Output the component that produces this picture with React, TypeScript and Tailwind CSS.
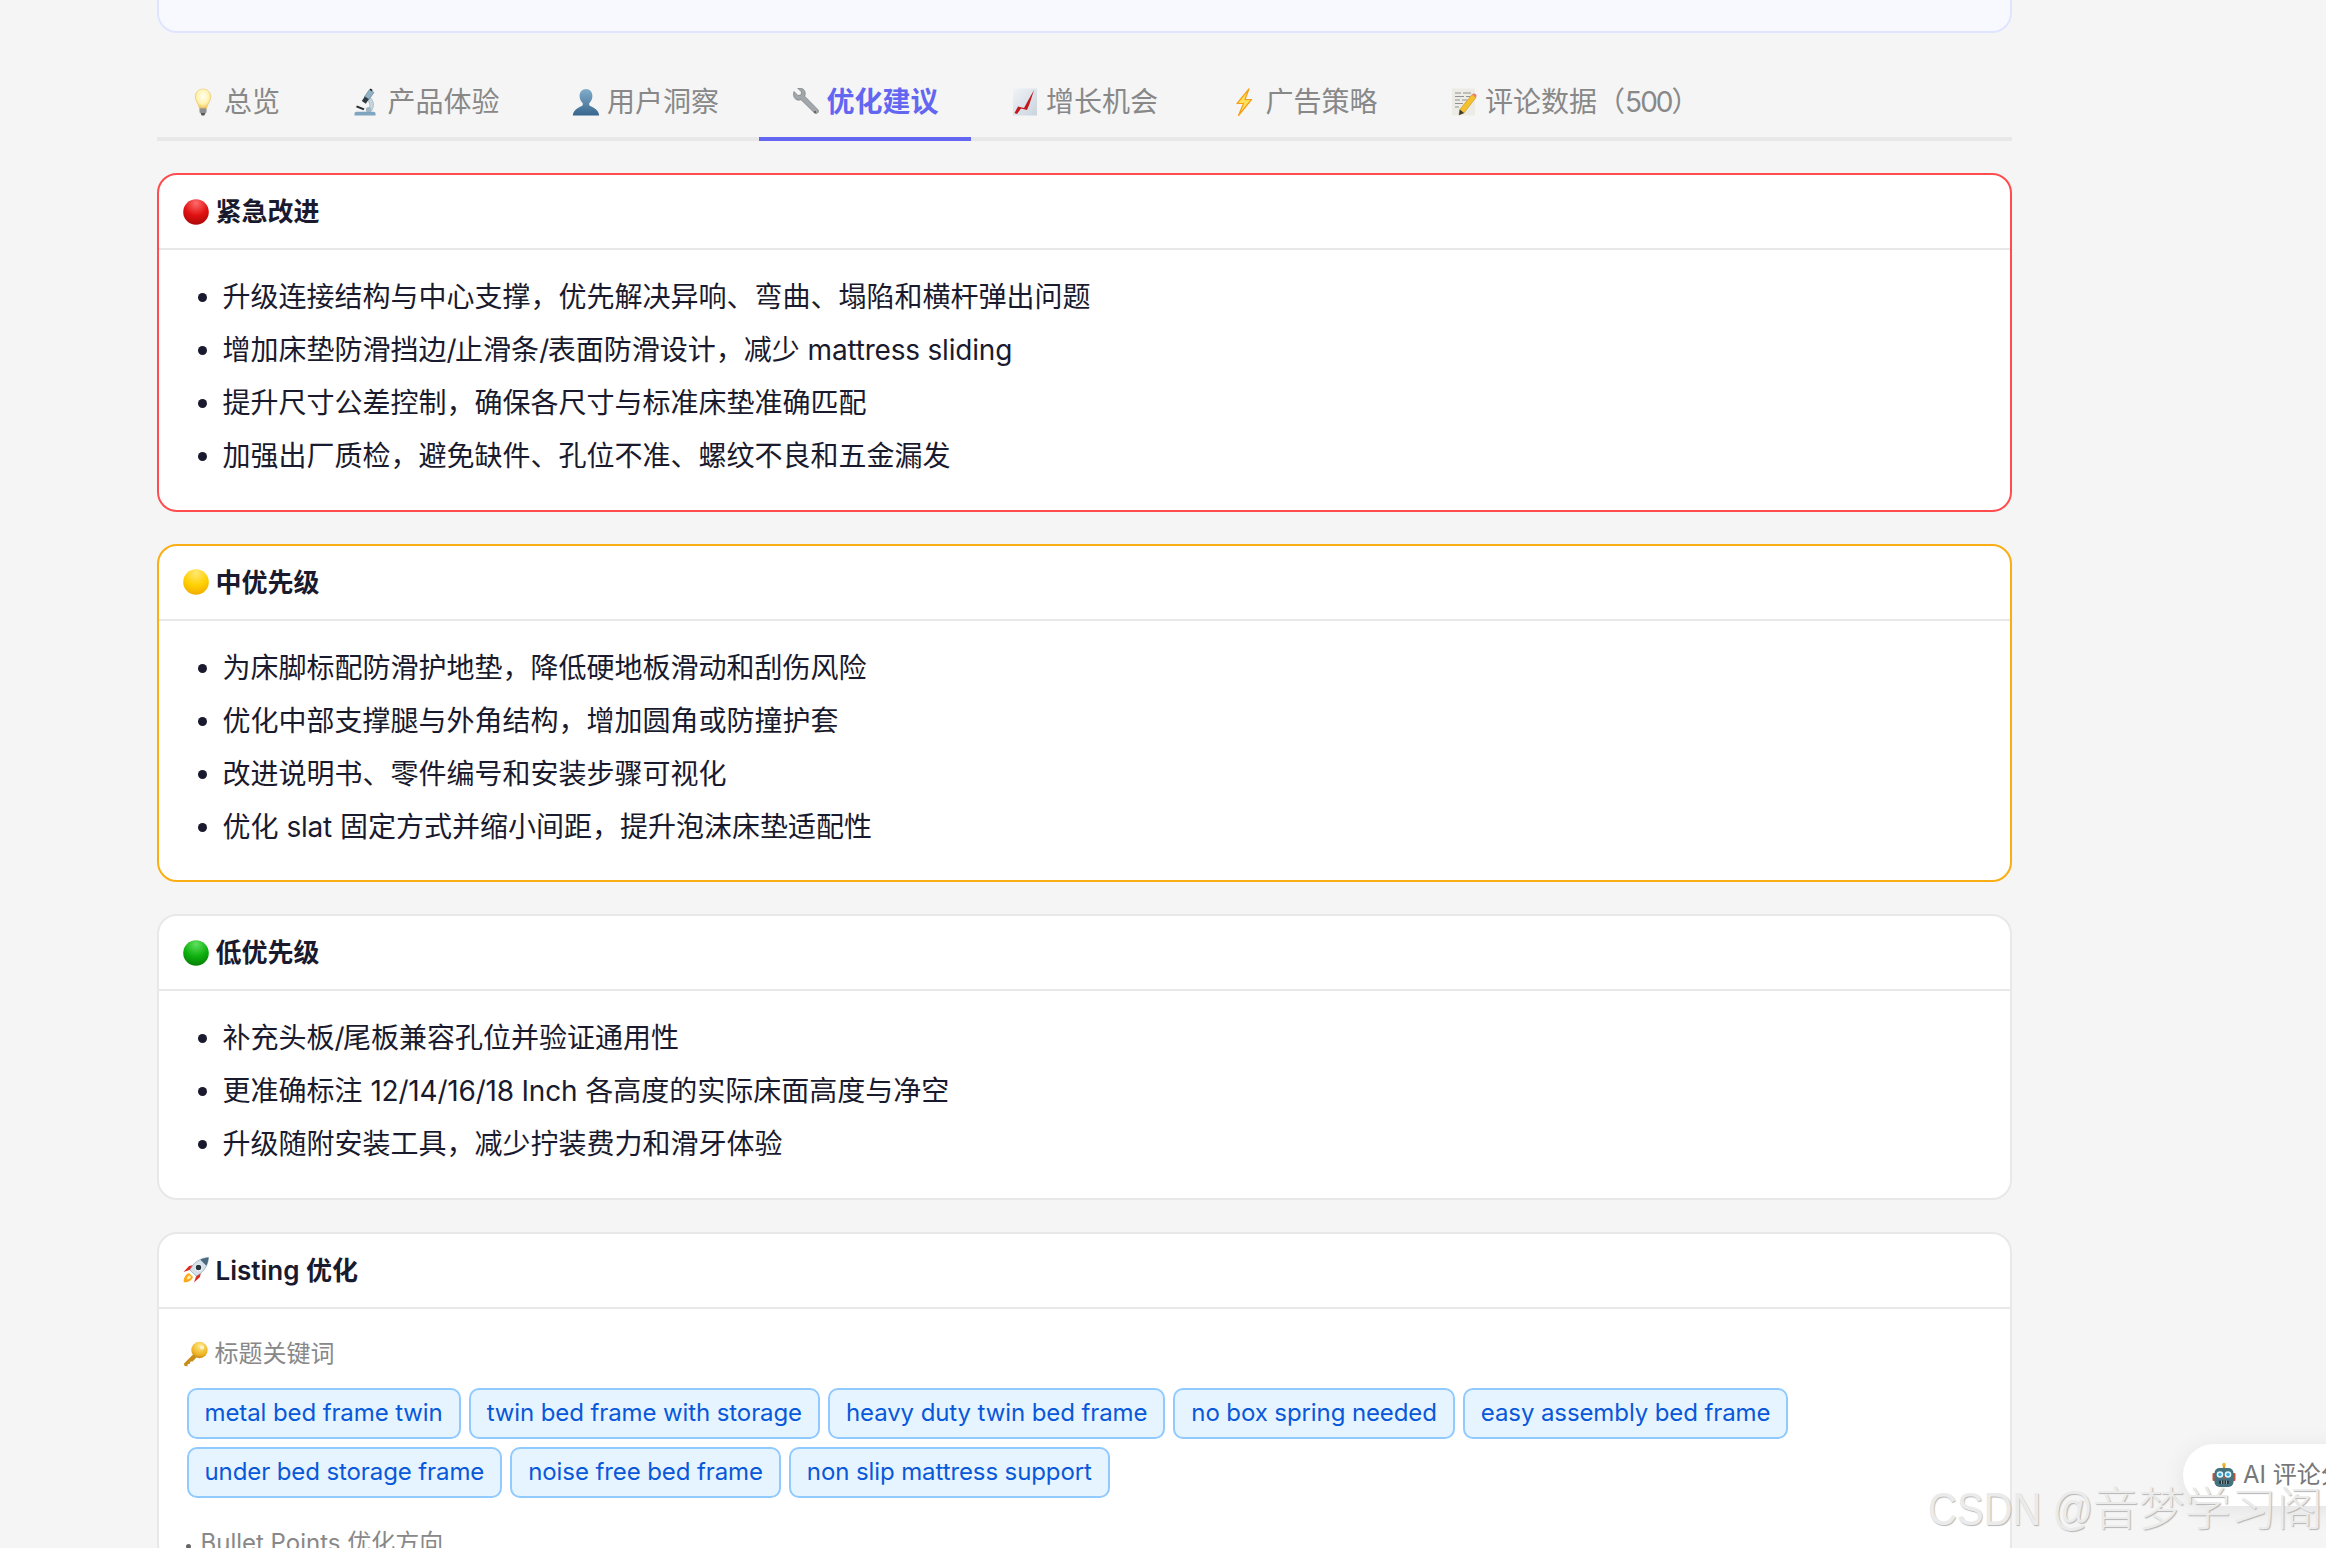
import React from "react";

const S = ({ w = 28, h = 28, vb = "0 0 28 28", children }: { w?: number; h?: number; vb?: string; children: React.ReactNode }) => (
  <svg width={w} height={h} viewBox={vb} className="block shrink-0">{children}</svg>
);

const Bulb = () => (
  <S>
    <defs>
      <radialGradient id="bulbG" cx="50%" cy="38%" r="60%">
        <stop offset="0%" stopColor="#fffef0" />
        <stop offset="65%" stopColor="#fff3b0" />
        <stop offset="100%" stopColor="#eec660" />
      </radialGradient>
    </defs>
    <path d="M14 1c-4.4 0-7.8 3.4-7.8 7.8 0 3.6 2.6 6.2 3.6 9.600.2.7.4 1.300.5 2h7.400c.1-.7.3-1.300.5-2 1-3.400 3.600-6 3.600-9.600C21.800 4.400 18.400 1 14 1z" fill="url(#bulbG)" stroke="#e9c566" strokeWidth="0.6" />
    <rect x="10.500" y="20.300" width="7" height="4.700" rx="1" fill="#8f8f8f" />
    <path d="M11.500 25h5l-1.200 2.500h-2.600z" fill="#555" />
  </S>
);
const Microscope = () => (
  <S>
    <path d="M2.500 27.500h21v-2c0-1.100-1-1.800-2-1.800h-17c-1 0-2 .7-2 1.800z" fill="#7fa5bf" />
    <path d="M17 9c4.800 2.200 6.200 9.500 1.800 14.700h-4.300c4-2.500 4.500-8 1-11.800z" fill="#c7d5de" stroke="#7d95a5" strokeWidth="0.5" />
    <path d="M12.500 8.500L17.500 1.500l4.500 3-5 7z" fill="#8fb0c6" stroke="#55707f" strokeWidth="0.5" />
    <path d="M9.800 13l3-4.500 4 2.800-3 4.500z" fill="#2f3b42" />
    <path d="M5 17.500l7.500 3-1 1.800-7.500-3z" fill="#2a2f33" />
    <circle cx="16.500" cy="21.500" r="2.600" fill="#9db4c2" />
    <path d="M18.500.5l2.200 1.500-.9 1.200-2.200-1.500z" fill="#1e2427" />
  </S>
);
const User = () => (
  <S>
    <defs>
      <linearGradient id="userG" x1="0" y1="0" x2="0" y2="1">
        <stop offset="0%" stopColor="#82aecb" />
        <stop offset="100%" stopColor="#38658d" />
      </linearGradient>
    </defs>
    <path d="M14 1c-4 0-6.400 3-6.400 7 0 3 1.400 5.500 3 7 .4.400.4 1.500 0 2.200C9.500 19 1.500 20 .8 27.500h26.400C26.500 20 18.500 19 17.400 17.200c-.4-.7-.4-1.800 0-2.200 1.600-1.500 3-4 3-7 0-4-2.400-7-6.400-7z" fill="url(#userG)" />
  </S>
);
const Wrench = () => (
  <S>
    <path d="M3 3.500l4 4 3-.5.500-3-3.800-3.800c3.500-1 7 1 7.500 4.500.2 1.300 0 2.500-.5 3.500l13 13.200c1 1 1 2.500 0 3.400-1 1-2.400 1-3.400 0L10 11.700c-1.200.5-2.500.6-3.800.2C2.800 11 1.800 7 3 3.500z" fill="#a2a7ab" stroke="#6a6e72" strokeWidth="0.6" />
    <circle cx="24" cy="24" r="1.100" fill="#5a5252" />
  </S>
);
const Chart = () => (
  <S>
    <defs>
      <linearGradient id="chartG" x1="0" y1="0" x2="1" y2="1">
        <stop offset="0%" stopColor="#f0f3f6" />
        <stop offset="100%" stopColor="#c9d4de" />
      </linearGradient>
    </defs>
    <rect x="2" y="0.500" width="24" height="27" fill="url(#chartG)" />
    <path d="M3.500 25l3.500-6.500 6 1.500 3-5.500 7-12.500-4.500 14-2.500 6-6-1.500-4 5.500z" fill="#c3181c" />
  </S>
);
const Bolt = () => (
  <S>
    <path d="M19 .8L7 15.500h6.500L8.500 27.500 21.500 11.500H15z" fill="#ffe05a" stroke="#f59d16" strokeWidth="1.200" strokeLinejoin="round" />
  </S>
);
const Memo = () => (
  <S>
    <rect x="2" y="0.500" width="23" height="27" fill="#ecebe6" />
    <path d="M5 5h6M13 5h8M5 8.500h9M16 8.500h4M5 12h5M12 12h5M5 15.500h8M5 19h4" stroke="#7a7a7a" strokeWidth="0.8" />
    <path d="M22 6.500l4 3L14 25l-5 2 .8-5.500z" fill="#f5c02e" stroke="#b9860f" strokeWidth="0.5" />
    <path d="M22 6.500c1.100-1.300 2.700-1.300 3.700-.4 1 .9 1.100 2.300.3 3.400z" fill="#ef7a7a" />
    <path d="M9.800 21.500l4.200 3.500-5 2z" fill="#3a3a3a" />
  </S>
);
const Dot = ({ id, a, b, c }: { id: string; a: string; b: string; c: string }) => (
  <S w={26} h={26} vb="0 0 26 26">
    <defs>
      <radialGradient id={id} cx="50%" cy="15%" r="90%">
        <stop offset="0%" stopColor={a} />
        <stop offset="55%" stopColor={b} />
        <stop offset="100%" stopColor={c} />
      </radialGradient>
    </defs>
    <circle cx="13" cy="13" r="12.800" fill={`url(#${id})`} />
  </S>
);
const Rocket = () => (
  <S w={26} h={28} vb="0 0 26 26">
    <path d="M8 12.500L.5 15l5.500-6 5-1z" fill="#e02a20" />
    <path d="M13.500 18L11 25.500l6-5.500 1-5z" fill="#e02a20" />
    <path d="M.8 25.200c-.4-3.800 1.400-7.800 5.200-9.200l4 4c-1.400 3.800-5.400 5.600-9.200 5.200z" fill="#fba81b" />
    <path d="M3.800 22.200c.1-1.500.9-3.200 2.600-4l1.700 1.700c-.8 1.700-2.500 2.500-4.300 2.300z" fill="#fff0a8" />
    <path d="M25.500.5c-6 .2-12 3-16 8L6.800 12.800l6.400 6.400 4.300-2.700c5-4 7.800-10 8-16z" fill="#d6e0e8" stroke="#6f8a9c" strokeWidth="0.5" />
    <path d="M25.500.5c-2.800.1-5.600.9-8.200 2.200l6 6c1.300-2.600 2.100-5.400 2.200-8.200z" fill="#4b6a80" />
    <circle cx="15.500" cy="10.500" r="3.300" fill="#26343f" stroke="#f0f4f6" strokeWidth="1.100" />
  </S>
);
const Key = () => (
  <S w={26} h={26} vb="0 0 26 26">
    <defs>
      <radialGradient id="keyG" cx="55%" cy="25%" r="80%">
        <stop offset="0%" stopColor="#ffe98a" />
        <stop offset="70%" stopColor="#eeb321" />
        <stop offset="100%" stopColor="#b87d10" />
      </radialGradient>
    </defs>
    <path d="M10 13.500L1 22.500l.5 2.500 3 .3.300-2.300 2.200-.2.300-2.200 2.300-.2 3.900-4z" fill="#c78d16" />
    <circle cx="16.500" cy="9" r="8.200" fill="url(#keyG)" />
    <circle cx="19" cy="6.500" r="2" fill="#fff6cc" />
  </S>
);
const Robot = () => (
  <S w={24} h={26} vb="0 0 24 26">
    <circle cx="12" cy="2.500" r="1.800" fill="#f5b52e" />
    <rect x="10.800" y="3.500" width="2.400" height="3" fill="#e09a22" />
    <rect x="0.500" y="11" width="3" height="8" rx="1" fill="#c0543f" />
    <rect x="20.500" y="11" width="3" height="8" rx="1" fill="#c0543f" />
    <rect x="2.500" y="6" width="19" height="19" rx="5" fill="#44727f" />
    <circle cx="8" cy="12.500" r="3.300" fill="#dff5fb" />
    <circle cx="16" cy="12.500" r="3.300" fill="#dff5fb" />
    <circle cx="8" cy="12.500" r="1.700" fill="#2ea9d9" />
    <circle cx="16" cy="12.500" r="1.700" fill="#2ea9d9" />
    <path d="M12 13.500l1.500 3h-3z" fill="#d3503f" />
    <rect x="7" y="18.500" width="10" height="3.500" rx="1.200" fill="#25363c" />
    <path d="M9.500 18.500v3.500M12 18.500v3.500M14.500 18.500v3.500" stroke="#a9bcc2" strokeWidth="0.8" />
  </S>
);

const tabs: { icon: React.ReactNode; label: React.ReactNode; key: string; active?: boolean }[] = [
  { icon: <Bulb />, label: "总览", key: "a" },
  { icon: <Microscope />, label: "产品体验", key: "b" },
  { icon: <User />, label: "用户洞察", key: "c" },
  { icon: <Wrench />, label: "优化建议", key: "d", active: true },
  { icon: <Chart />, label: "增长机会", key: "e" },
  { icon: <Bolt />, label: "广告策略", key: "f" },
  {
    icon: <Memo />,
    key: "g",
    label: (
      <>
        评论数据（<span className="tracking-[-2px]">500</span>）
      </>
    ),
  },
];

const Card = ({
  icon,
  title,
  border,
  children,
}: {
  icon: React.ReactNode;
  title: string;
  border: string;
  children: React.ReactNode;
}) => (
  <section className={`rounded-[20px] border-2 bg-white ${border}`}>
    <header className="flex h-[75px] items-center gap-[7px] border-b-2 border-[#e8e8e8] px-6 text-[26px] font-semibold text-[#1a1a2e]">
      {icon}
      <span>{title}</span>
    </header>
    {children}
  </section>
);

const Runs = ({ text }: { text: string }) => (
  <>
    {text.split(/([\x21-\x7e]+(?: [\x21-\x7e]+)*)/).map((part, i) =>
      i % 2 === 0 ? (
        part
      ) : (
        <span key={i} className={part === "/" ? "tracking-[-1.5px]" : "tracking-[-0.2px]"}>
          {part}
        </span>
      ),
    )}
  </>
);

const Items = ({ items }: { items: string[] }) => (
  <ul className="list-disc pb-[26.500px] pl-[64px] pr-6 pt-[21px] text-[28px] leading-[53px] text-[#1a1a2e]">
    {items.map((t) => (
      <li key={t}>
        <Runs text={t} />
      </li>
    ))}
  </ul>
);

const chips = [
  "metal bed frame twin",
  "twin bed frame with storage",
  "heavy duty twin bed frame",
  "no box spring needed",
  "easy assembly bed frame",
  "under bed storage frame",
  "noise free bed frame",
  "non slip mattress support",
];

export default function App() {
  return (
    <div
      className="relative h-[1548px] w-[2326px] overflow-hidden bg-[#f5f5f5] pl-[156.500px]"
      style={{ fontFamily: '"Inter", "Noto Sans CJK SC", sans-serif' }}
    >
      <div className="flex w-[1855px] flex-col">
        <div className="h-[33px] rounded-b-[20px] border-2 border-t-0 border-[#e0e5ff] bg-[#f8f9ff]" />

        <nav className="mt-[32px] flex h-[76px] gap-2 border-b-4 border-[#e8e8e8]">
          {tabs.map((t) => (
            <div
              key={t.key}
              className={
                t.active
                  ? "-mb-1 flex h-[76px] items-center gap-[7.500px] border-b-4 border-[#6366f1] px-8 pt-[1px] text-[28px] font-semibold text-[#6366f1]"
                  : "flex h-[72px] items-center gap-[7.500px] px-8 pt-[1px] text-[28px] text-[#888888]"
              }
            >
              {t.icon}
              <span>{t.label}</span>
            </div>
          ))}
        </nav>

        <div className="mt-8 flex flex-col gap-8">
          <Card icon={<Dot id="d1" a="#ff6a6a" b="#e01010" c="#a30808" />} title="紧急改进" border="border-[#ff4d4f]">
            <Items
              items={[
                "升级连接结构与中心支撑，优先解决异响、弯曲、塌陷和横杆弹出问题",
                "增加床垫防滑挡边/止滑条/表面防滑设计，减少 mattress sliding",
                "提升尺寸公差控制，确保各尺寸与标准床垫准确匹配",
                "加强出厂质检，避免缺件、孔位不准、螺纹不良和五金漏发",
              ]}
            />
          </Card>
          <Card icon={<Dot id="d2" a="#ffe873" b="#ffd000" c="#f0a800" />} title="中优先级" border="border-[#faad14]">
            <Items
              items={[
                "为床脚标配防滑护地垫，降低硬地板滑动和刮伤风险",
                "优化中部支撑腿与外角结构，增加圆角或防撞护套",
                "改进说明书、零件编号和安装步骤可视化",
                "优化 slat 固定方式并缩小间距，提升泡沫床垫适配性",
              ]}
            />
          </Card>
          <Card icon={<Dot id="d3" a="#5fe05f" b="#0eb00e" c="#067a06" />} title="低优先级" border="border-[#e8e8e8]">
            <Items
              items={[
                "补充头板/尾板兼容孔位并验证通用性",
                "更准确标注 12/14/16/18 Inch 各高度的实际床面高度与净空",
                "升级随附安装工具，减少拧装费力和滑牙体验",
              ]}
            />
          </Card>
          <Card icon={<Rocket />} title="Listing 优化" border="border-[#e8e8e8]">
            <div className="px-6 pt-[26px]">
              <div className="flex h-[38px] items-center gap-[6px] text-[24px] text-[#888888]">
                <Key />
                <span>标题关键词</span>
              </div>
              <div className="ml-1 mt-[15px] flex flex-wrap gap-2">
                {chips.map((c) => (
                  <span
                    key={c}
                    className="flex h-[51px] items-center rounded-[10px] border-2 border-[#91caff] bg-[#e6f4ff] px-4 text-[24px] tracking-[-0.1px] text-[#0958d9]"
                  >
                    {c}
                  </span>
                ))}
              </div>
              <div className="mt-[26px] flex h-[38px] items-center text-[24px] text-[#888888]">
                <span className="mr-[10px] ml-[3px] mt-[8px] h-[5px] w-[5px] rounded-full bg-[#666666]" />
                <span>Bullet Points 优化方向</span>
              </div>
            </div>
          </Card>
        </div>
      </div>

      <div className="absolute left-[2183px] top-[1444px] flex h-[62px] w-[300px] items-center gap-[7px] rounded-l-[31px] bg-white pl-[29px] text-[24px] text-[#777777] shadow-[0_4px_24px_rgba(0,0,0,0.08)]">
        <Robot />
        <span>AI 评论分析</span>
      </div>

      <div
        className="absolute left-[1928px] top-[1481px] whitespace-nowrap text-[46px] font-light leading-[56px] text-[#ebebeb] [text-shadow:1px_1px_1px_#b5b5b5]"
        style={{ fontFamily: '"Liberation Sans", "Noto Sans CJK SC", sans-serif' }}
      >
        <span className="mr-[-25px] inline-block origin-left scale-x-[0.87]">CSDN @</span>
        音梦学习阁
      </div>
    </div>
  );
}
